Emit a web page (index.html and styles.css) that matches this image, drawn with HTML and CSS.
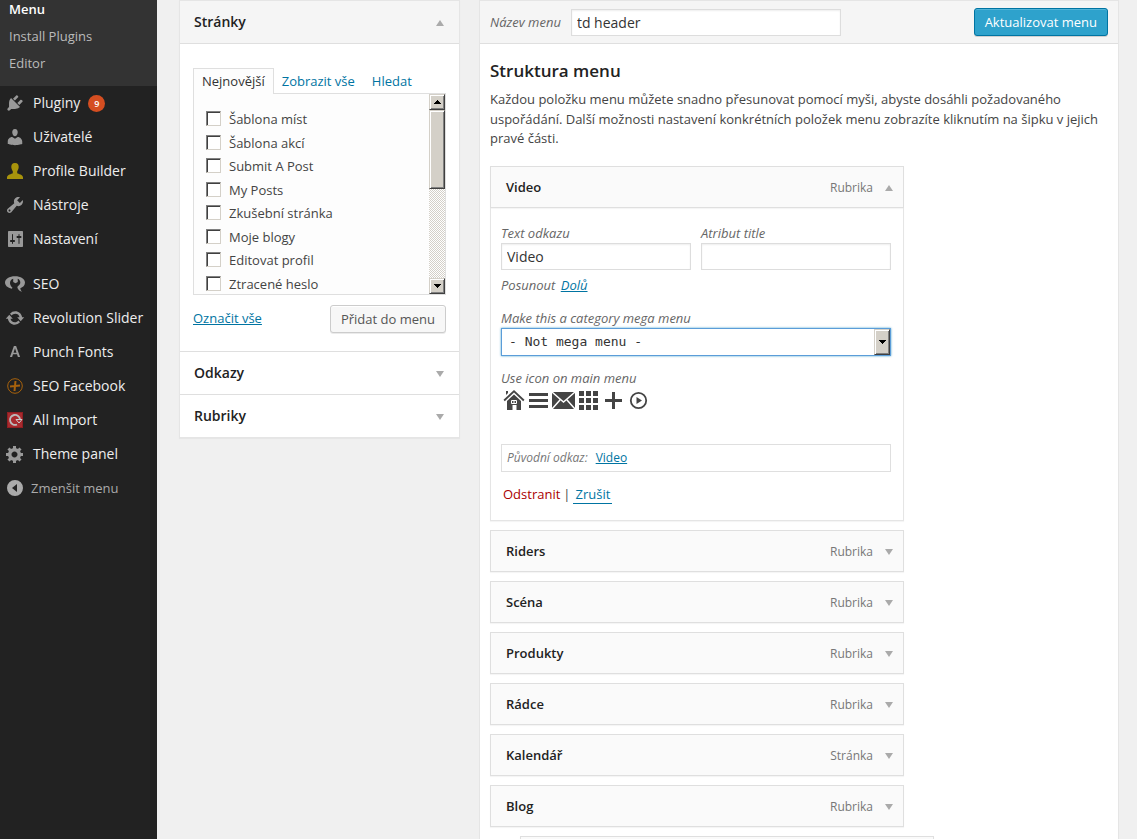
FILE: index.html
```html
<!DOCTYPE html>
<html lang="cs">
<head>
    <meta charset="UTF-8">
    <meta name="viewport" content="width=device-width, initial-scale=1.0">
    <title>Menu</title>
    <link rel="stylesheet" href="styles.css">
</head>
<body>
    <nav class="admin-menu">
        <ul class="submenu">
            <li><a href="#" class="current">Menu</a></li>
            <li><a href="#">Install Plugins</a></li>
            <li><a href="#">Editor</a></li>
        </ul>
        <ul class="menu-list">
            <li><a href="#">
                <svg viewBox="0 0 20 20"><path d="M13.11 4.36 9.87 7.6 8 5.73l3.24-3.24c.35-.34 1.05-.2 1.56.32.52.51.66 1.21.31 1.55zm-8 1.77.91-1.12 9.01 9.01-1.19.84c-.71.71-2.63 1.16-3.82 1.16H6.14L4.9 17.26c-.59.59-1.54.59-2.12 0a1.49 1.49 0 0 1 0-2.12l1.24-1.24v-3.88c0-1.13.4-3.19 1.09-3.89zm7.26 3.97 3.24-3.24c.34-.35 1.04-.21 1.55.31.52.51.66 1.21.31 1.55l-3.24 3.25z"/></svg>
                <span>Pluginy</span><b class="count">9</b></a></li>
            <li><a href="#">
                <svg viewBox="0 0 20 20"><path d="M10 9.25c-2.27 0-2.73-3.44-2.73-3.44C7 4.02 7.82 2 9.97 2c2.16 0 2.98 2.02 2.71 3.81 0 0-.41 3.44-2.68 3.44zm0 2.57L12.72 10c2.39 0 4.52 2.33 4.52 4.53v2.49s-3.65 1.13-7.24 1.13c-3.65 0-7.24-1.13-7.24-1.13v-2.49c0-2.25 1.94-4.48 4.47-4.48z"/></svg>
                <span>Uživatelé</span></a></li>
            <li><a href="#">
                <svg viewBox="0 0 20 20" class="gold"><path d="M10 2c2.900 0 3.900 2 3.700 4.300-.2 2-.9 3-1.500 3.900v2.100c1 .9 5.800 1.200 5.800 4.200V18H2v-1.500c0-3 4.800-3.300 5.800-4.200v-2.100c-.6-.9-1.300-1.900-1.500-3.900C6.100 4 7.100 2 10 2z"/></svg>
                <span>Profile Builder</span></a></li>
            <li><a href="#">
                <svg viewBox="0 0 20 20"><path d="M16.68 9.77a4.543 4.543 0 0 1-4.95.99l-5.41 6.52c-.99.99-2.59.99-3.58 0s-.99-2.59 0-3.57l6.52-5.42c-.68-1.65-.35-3.61.99-4.95 1.28-1.28 3.12-1.62 4.72-1.06l-2.89 2.89 2.82 2.82 2.86-2.87c.53 1.58.18 3.39-1.08 4.65zM3.81 16.21c.4.39 1.04.39 1.43 0 .4-.4.4-1.04 0-1.43-.39-.4-1.03-.4-1.43 0-.39.39-.39 1.03 0 1.43z"/></svg>
                <span>Nástroje</span></a></li>
            <li><a href="#">
                <svg viewBox="0 0 20 20"><path d="M18 17V3c0-.6-.4-1-1-1H4c-.6 0-1 .4-1 1v14c0 .6.4 1 1 1h13c.6 0 1-.4 1-1zM8 11h1c.55 0 1 .45 1 1s-.45 1-1 1H8v1.500c0 .28-.22.5-.5.5s-.5-.22-.5-.5V13H6c-.55 0-1-.45-1-1s.45-1 1-1h1V5.500c0-.28.22-.5.5-.5s.5.22.5.5V11zm5.500-2h-1c-.55 0-1-.45-1-1s.45-1 1-1h1V5.500c0-.28.22-.5.5-.5s.5.22.5.5V7h1c.55 0 1 .45 1 1s-.45 1-1 1h-1v5.500c0 .28-.22.5-.5.5s-.5-.22-.5-.5V9z"/></svg>
                <span>Nastavení</span></a></li>
            <li class="separated"><a href="#">
                <svg viewBox="0 0 20 20"><path d="M10 2.200c5.600 0 10 2.500 10 6.400 0 3-2.200 4.800-4.700 5.700.2 1.400.7 2.600 1.800 3.500-2.200-.4-3.900-1.800-4.600-3.700-.3-1 0-1.700.9-2.300 1.200-.8 1.900-1.700 1.900-3.200 0-2-1-3.400-2.600-3.900l.1 3.200-2.300 1.300-2.300-1.300V4.700C6.300 5.200 5 6.800 5 9c0 1.900 1 3.500 2.500 4.700l-.7 1C2.600 13.900 0 11.600 0 8.600c0-3.900 4.400-6.400 10-6.400z"/></svg>
                <span>SEO</span></a></li>
            <li><a href="#">
                <svg viewBox="0 0 20 20"><path d="M10.200 3.280c3.530 0 6.430 2.610 6.920 6h2.080l-3.500 4-3.500-4h2.320a4.439 4.439 0 0 0-4.320-3.450c-1.450 0-2.730.71-3.540 1.780L4.950 5.660a6.965 6.965 0 0 1 5.250-2.380zm-.4 13.440c-3.520 0-6.430-2.610-6.920-6H.8l3.500-4c1.170 1.330 2.330 2.670 3.500 4H5.480a4.439 4.439 0 0 0 4.320 3.450c1.450 0 2.730-.71 3.540-1.780l1.710 1.950a6.950 6.950 0 0 1-5.250 2.380z"/></svg>
                <span>Revolution Slider</span></a></li>
            <li><a href="#">
                <svg viewBox="0 0 20 20"><path fill-rule="evenodd" d="M8.900 4h2.200l4 11h-2.200l-.9-2.700H8L7.100 15H4.900zM10 6.200 8.500 10.700h3z"/></svg>
                <span>Punch Fonts</span></a></li>
            <li><a href="#">
                <svg viewBox="0 0 20 20" class="ring"><circle cx="10" cy="10" r="7.300"/><path class="thick" d="M5 10.500l10-1M10.500 5l-1 10"/></svg>
                <span>SEO Facebook</span></a></li>
            <li><a href="#">
                <svg viewBox="0 0 20 20"><path fill="#8f1e22" d="M2 2h16v16H2z"/><path fill="#a82a2e" d="M3 3h14v14H3z"/><path fill="none" stroke="#bbb" stroke-width="1.800" d="M12 14.500a5 5 0 1 1 3-5"/><path fill="#a82a2e" stroke="#ccc" d="M11 9.500h6l-3 3.500z"/></svg>
                <span>All Import</span></a></li>
            <li><a href="#">
                <svg viewBox="0 0 20 20"><path d="M18 12h-2.180c-.17.7-.44 1.350-.81 1.930l1.540 1.540-2.100 2.100-1.540-1.540c-.58.36-1.230.63-1.910.79V19H8v-2.180c-.68-.16-1.330-.43-1.910-.79l-1.540 1.540-2.120-2.120 1.540-1.540c-.36-.58-.63-1.230-.79-1.910H1V9.030h2.170c.16-.7.44-1.350.8-1.940L2.430 5.550l2.100-2.100 1.540 1.540c.58-.37 1.240-.64 1.930-.81V2h3v2.180c.68.16 1.330.43 1.910.79l1.540-1.540 2.120 2.120-1.540 1.540c.36.59.64 1.240.8 1.940H18V12zm-8.500 1.500c1.660 0 3-1.340 3-3s-1.340-3-3-3-3 1.340-3 3 1.340 3 3 3z"/></svg>
                <span>Theme panel</span></a></li>
        </ul>
        <button type="button" class="collapse">
            <svg viewBox="0 0 20 20"><path fill-rule="evenodd" d="M10 2a8 8 0 1 1 0 16 8 8 0 0 1 0-16zm2 4-5 4 5 4z"/></svg>
            <span>Zmenšit menu</span>
        </button>
    </nav>

    <main>
        <aside class="accordion">
            <h3 class="accordion-title open">Stránky <span class="arrow up"></span></h3>
            <div class="accordion-body">
                <div class="tabs">
                    <a href="#" class="active">Nejnovější</a>
                    <a href="#">Zobrazit vše</a>
                    <a href="#">Hledat</a>
                </div>
                <div class="tab-panel">
                    <ul class="checklist">
                        <li><label><input type="checkbox">Šablona míst</label></li>
                        <li><label><input type="checkbox">Šablona akcí</label></li>
                        <li><label><input type="checkbox">Submit A Post</label></li>
                        <li><label><input type="checkbox">My Posts</label></li>
                        <li><label><input type="checkbox">Zkušební stránka</label></li>
                        <li><label><input type="checkbox">Moje blogy</label></li>
                        <li><label><input type="checkbox">Editovat profil</label></li>
                        <li><label><input type="checkbox">Ztracené heslo</label></li>
                    </ul>
                    <div class="scrollbar">
                        <span class="scroll-end"><svg viewBox="0 0 7 4"><path d="M3 0h1v1h1v1h1v1h1v1H0V3h1V2h1V1h1z"/></svg></span>
                        <span class="scroll-thumb"></span>
                        <span class="scroll-end last"><svg viewBox="0 0 7 4"><path d="M0 0h7v1H6v1H5v1H4v1H3V3H2V2H1V1H0z"/></svg></span>
                    </div>
                </div>
                <div class="accordion-actions">
                    <a href="#">Označit vše</a>
                    <button type="button" class="button">Přidat do menu</button>
                </div>
            </div>
            <h3 class="accordion-title">Odkazy <span class="arrow"></span></h3>
            <h3 class="accordion-title">Rubriky <span class="arrow"></span></h3>
        </aside>

        <section class="menu-edit">
            <header class="menu-header">
                <label for="menu-name">Název menu</label>
                <input type="text" id="menu-name" value="td header">
                <button type="button" class="button primary">Aktualizovat menu</button>
            </header>
            <div class="menu-body">
                <h2>Struktura menu</h2>
                <p>Každou položku menu můžete snadno přesunovat pomocí myši, abyste dosáhli požadovaného uspořádání. Další možnosti nastavení konkrétních položek menu zobrazíte kliknutím na šipku v jejich pravé části.</p>

                <ul class="items">
                    <li>
                        <div class="bar"><strong>Video</strong><span>Rubrika</span><i class="arrow up"></i></div>
                        <div class="settings">
                            <div class="fields">
                                <div class="field">
                                    <label for="link-text">Text odkazu</label>
                                    <input type="text" id="link-text" value="Video">
                                </div>
                                <div class="field">
                                    <label for="link-title">Atribut title</label>
                                    <input type="text" id="link-title">
                                </div>
                            </div>
                            <div class="move">Posunout <a href="#">Dolů</a></div>
                            <div class="field mega">
                                <label for="mega-menu">Make this a category mega menu</label>
                                <div class="select-wrap">
                                    <select id="mega-menu">
                                        <option>- Not mega menu -</option>
                                    </select>
                                    <span class="select-button"><svg viewBox="0 0 7 4"><path d="M0 0h7v1H6v1H5v1H4v1H3V3H2V2H1V1H0z"/></svg></span>
                                </div>
                            </div>
                            <div class="icon-label">Use icon on main menu</div>
                            <div class="icons">
                                <svg viewBox="0 0 22 22"><path d="M3 2h2v2L3 6zM11 1l10.500 9.800-1.300 1.400L11 3.600l-9.200 8.600-1.300-1.400zM11 5.500l7 6.500v9h-4.500v-5h-4v5H4v-9z"/><path stroke="#fff" fill="none" d="M8.500 11.500h5v3h-5zM11 11.500v3"/></svg>
                                <svg viewBox="0 0 22 22"><path d="M1 4h19v3H1zM1 10h19v3H1zM1 16h19v3H1z"/></svg>
                                <svg viewBox="0 0 22 22"><path d="M-1 3h23v17H-1z"/><path stroke="#fff" stroke-width="1.500" fill="none" d="M-1 3l11.500 10L22 3M-1 20l8-9M22 20l-8-9"/></svg>
                                <svg viewBox="0 0 22 22"><path d="M1 2h5v5H1zM8 2h5v5H8zM15 2h5v5h-5zM1 9h5v5H1zM8 9h5v5H8zM15 9h5v5h-5zM1 16h5v5H1zM8 16h5v5H8zM15 16h5v5h-5z"/></svg>
                                <svg viewBox="0 0 22 22"><path d="M9 3h3v7h7v3h-7v7H9v-7H2v-3h7z"/></svg>
                                <svg viewBox="0 0 22 22"><circle cx="10.500" cy="11.500" r="7.700" fill="none" stroke="#444" stroke-width="1.800"/><path d="M8.500 8v7l5.500-3.500z"/></svg>
                            </div>
                            <div class="original"><em>Původní odkaz:</em> <a href="#">Video</a></div>
                            <div class="item-actions"><a href="#" class="delete">Odstranit</a><span>|</span><a href="#" class="cancel">Zrušit</a></div>
                        </div>
                    </li>
                    <li><div class="bar"><strong>Riders</strong><span>Rubrika</span><i class="arrow"></i></div></li>
                    <li><div class="bar"><strong>Scéna</strong><span>Rubrika</span><i class="arrow"></i></div></li>
                    <li><div class="bar"><strong>Produkty</strong><span>Rubrika</span><i class="arrow"></i></div></li>
                    <li><div class="bar"><strong>Rádce</strong><span>Rubrika</span><i class="arrow"></i></div></li>
                    <li><div class="bar"><strong>Kalendář</strong><span>Stránka</span><i class="arrow"></i></div></li>
                    <li><div class="bar"><strong>Blog</strong><span>Rubrika</span><i class="arrow"></i></div></li>
                    <li class="child"><div class="bar"></div></li>
                </ul>
            </div>
        </section>
    </main>
</body>
</html>
```

FILE: styles.css
```css
* {
    box-sizing: border-box;
}
body {
    display: flex;
    height: 100vh;
    margin: 0;
    overflow: hidden;
    background-color: #f0f0f0;
    color: #444;
    font-family: "Open Sans", sans-serif;
    font-size: 13px;
    line-height: 1.5;
}
ul {
    margin: 0;
    padding: 0;
    list-style: none;
}
h2, h3, p {
    margin: 0;
}
a {
    color: #0074a2;
}
input, select, button {
    font-family: inherit;
    margin: 0;
}

/* left admin menu */
.admin-menu {
    flex: none;
    width: 157px;
    background-color: #222;
}
.submenu {
    display: flex;
    flex-direction: column;
    gap: 9px;
    padding: 0 9px 14px;
    background-color: #333;
    line-height: 18px;
}
.submenu a {
    color: #bbb;
    text-decoration: none;
}
.submenu .current {
    color: #fff;
    font-weight: 600;
}
.menu-list a, .collapse {
    display: flex;
    align-items: center;
    gap: 8px;
    height: 34px;
    padding: 0 5px;
    color: #eee;
    font-size: 14px;
    text-decoration: none;
    white-space: nowrap;
}
.menu-list span {
    padding-bottom: 2px;
}
.menu-list .separated {
    margin-top: 11px;
}
.admin-menu svg {
    flex: none;
    width: 20px;
    height: 20px;
    fill: #999;
}
.admin-menu .gold {
    fill: #a8930c;
}
.admin-menu .ring {
    fill: none;
    stroke: #a8620c;
    stroke-width: 1;
}
.ring .thick {
    stroke-width: 2;
}
.count {
    width: 17px;
    height: 17px;
    border-radius: 50%;
    background-color: #d54e21;
    color: #fff;
    font-size: 9px;
    font-weight: 600;
    line-height: 17px;
    text-align: center;
}
.collapse {
    gap: 6px;
    border: none;
    background: none;
    color: #aaa;
    font-size: 13px;
    cursor: pointer;
}
.admin-menu .collapse svg {
    fill: #aaa;
}

main {
    display: flex;
    flex: 1;
    align-items: flex-start;
    gap: 19px;
    min-width: 0;
    padding: 0 18px 0 22px;
}

/* arrows shared by boxes and items */
.arrow {
    width: 0;
    border: 4px solid transparent;
    border-top: 6px solid #aaa;
    border-bottom: none;
}
.arrow.up {
    border-top: none;
    border-bottom: 6px solid #aaa;
}

.button {
    height: 28px;
    padding: 0 10px;
    border: 1px solid #ccc;
    border-radius: 3px;
    background-color: #f7f7f7;
    box-shadow: inset 0 1px 0 #fff, 0 1px 0 rgba(0, 0, 0, 0.08);
    color: #555;
    font-size: 13px;
    cursor: pointer;
}
.button.primary {
    border-color: #0074a2;
    background-color: #2ea2cc;
    box-shadow: inset 0 1px 0 rgba(120, 200, 230, 0.5), 0 1px 0 rgba(0, 0, 0, 0.15);
    color: #fff;
}

/* pages, links, categories */
.accordion {
    flex: none;
    width: 281px;
    border: 1px solid #e5e5e5;
    background-color: #fff;
    box-shadow: 0 1px 1px rgba(0, 0, 0, 0.04);
}
.accordion-title {
    display: flex;
    align-items: center;
    justify-content: space-between;
    height: 43px;
    padding: 0 15px 2px 14px;
    border-top: 1px solid #dfdfdf;
    color: #222;
    font-size: 14px;
    font-weight: 600;
}
.accordion-title .arrow {
    margin-top: 3px;
}
.accordion-title.open {
    border-top: none;
    border-bottom: 1px solid #dfdfdf;
    background-color: #f5f5f5;
}
.accordion-body {
    padding: 24px 13px 18px;
}
.tabs {
    display: flex;
    height: 26px;
    margin-bottom: -1px;
}
.tabs a {
    padding: 3px 8px 0;
    border: 1px solid transparent;
    border-width: 1px 1px 0 0;
    text-decoration: none;
}
.tabs .active {
    position: relative;
    border-color: #dfdfdf;
    border-left-width: 1px;
    background-color: #fdfdfd;
    color: #333;
}
.tab-panel {
    display: flex;
    justify-content: space-between;
    height: 202px;
    overflow: hidden;
    border: 1px solid #dfdfdf;
    background-color: #fdfdfd;
}
.checklist {
    padding: 16px 12px 0;
}
.checklist li {
    margin-bottom: 4px;
}
.checklist label {
    display: flex;
    gap: 8px;
}
.checklist input {
    appearance: none;
    width: 15px;
    height: 15px;
    margin-top: 1px;
    border: 1px solid;
    border-color: #808080 #d4d0c8 #d4d0c8 #808080;
    background-color: #fff;
    box-shadow: inset 1px 1px 0 #404040;
}
.scrollbar {
    display: flex;
    flex-direction: column;
    width: 16px;
    background: repeating-conic-gradient(#d4d0c8 0 25%, #fff 0 50%) 0 0 / 2px 2px;
}
.scroll-end, .scroll-thumb, .select-button {
    display: flex;
    align-items: center;
    justify-content: center;
    height: 16px;
    border: 1px solid;
    border-color: #d4d0c8 #404040 #404040 #d4d0c8;
    background-color: #d4d0c8;
    box-shadow: inset 1px 1px 0 #fff, inset -1px -1px 0 #808080;
}
.scroll-end.last {
    margin-top: auto;
}
.scroll-end svg, .select-button svg {
    width: 7px;
    height: 4px;
}
.scroll-thumb {
    height: 79px;
}
.accordion-actions {
    display: flex;
    align-items: center;
    justify-content: space-between;
    padding-top: 10px;
}

/* menu editor */
.menu-edit {
    flex: 1;
    min-width: 0;
    border: 1px solid #e5e5e5;
    background-color: #fff;
}
.menu-header {
    display: flex;
    align-items: center;
    height: 43px;
    padding: 0 10px;
    border-bottom: 1px solid #dfdfdf;
    background-color: #f5f5f5;
}
.menu-header label {
    padding-top: 2px;
}
.menu-header label, .field label, .move, .icon-label {
    color: #666;
    font-style: italic;
}
input[type="text"] {
    height: 27px;
    padding: 0 5px;
    border: 1px solid #ddd;
    background-color: #fff;
    box-shadow: inset 0 1px 2px rgba(0, 0, 0, 0.07);
    color: #333;
    font-size: 14px;
}
.menu-header input {
    width: 270px;
    margin-left: 10px;
}
.menu-header .primary {
    margin-left: auto;
}
.menu-body {
    padding: 15px 10px;
}
.menu-body h2 {
    margin-bottom: 7px;
    color: #222;
    font-size: 17px;
    font-weight: 600;
    line-height: 24px;
}
.items {
    display: flex;
    flex-direction: column;
    gap: 9px;
    width: 414px;
    margin-top: 17px;
}
.items .child {
    margin-right: -30px;
    margin-left: 30px;
}
.bar {
    display: flex;
    align-items: center;
    height: 42px;
    padding: 2px 10px 0 15px;
    border: 1px solid #dfdfdf;
    background-color: #fafafa;
    box-shadow: 0 1px 1px rgba(0, 0, 0, 0.04);
}
.bar strong {
    color: #222;
    font-weight: 600;
}
.bar span {
    margin-right: 12px;
    margin-left: auto;
    color: #777;
    font-size: 12px;
}
.settings {
    padding: 15px 12px 16px 10px;
    border: 1px solid #e5e5e5;
    border-top: none;
    box-shadow: 0 1px 1px rgba(0, 0, 0, 0.04);
}
.fields {
    display: flex;
    gap: 10px;
}
.field {
    display: flex;
    flex: 1;
    flex-direction: column;
    min-width: 0;
}
.field label {
    line-height: 20px;
}
.move {
    margin-top: 5px;
    line-height: 20px;
}
.move a {
    margin-left: 2px;
}
.mega {
    margin-top: 13px;
}
.select-wrap {
    position: relative;
    height: 28px;
    border: 1px solid #5b9dd9;
    background-color: #fff;
    box-shadow: 0 0 2px rgba(30, 140, 190, 0.8);
}
.select-wrap select {
    width: 100%;
    height: 26px;
    padding: 0 24px 0 7px;
    appearance: none;
    border: none;
    background: none;
    color: #333;
    font-family: "DejaVu Sans Mono", monospace;
    font-size: 13px;
}
/* classic drop-down button over the right end of the select */
.select-button {
    position: absolute;
    top: 0;
    right: 0;
    width: 16px;
    height: 26px;
    pointer-events: none;
}
.icon-label {
    margin-top: 12px;
    line-height: 20px;
}
.icons {
    display: flex;
    gap: 3px;
    padding: 1px 2px;
}
.icons svg {
    width: 22px;
    height: 22px;
    overflow: visible;
    fill: #444;
}
.original {
    display: flex;
    align-items: center;
    gap: 8px;
    height: 28px;
    margin-top: 32px;
    padding: 0 5px;
    border: 1px solid #dfdfdf;
    font-size: 12px;
}
.original em {
    color: #777;
}
.item-actions {
    display: flex;
    gap: 3px;
    margin-top: 13px;
    padding: 0 2px;
}
.item-actions a {
    text-decoration: none;
}
.item-actions .delete {
    color: #a00;
}
.item-actions .cancel {
    padding: 0 2px;
    border-bottom: 1px solid #0074a2;
    line-height: 18px;
}
```
